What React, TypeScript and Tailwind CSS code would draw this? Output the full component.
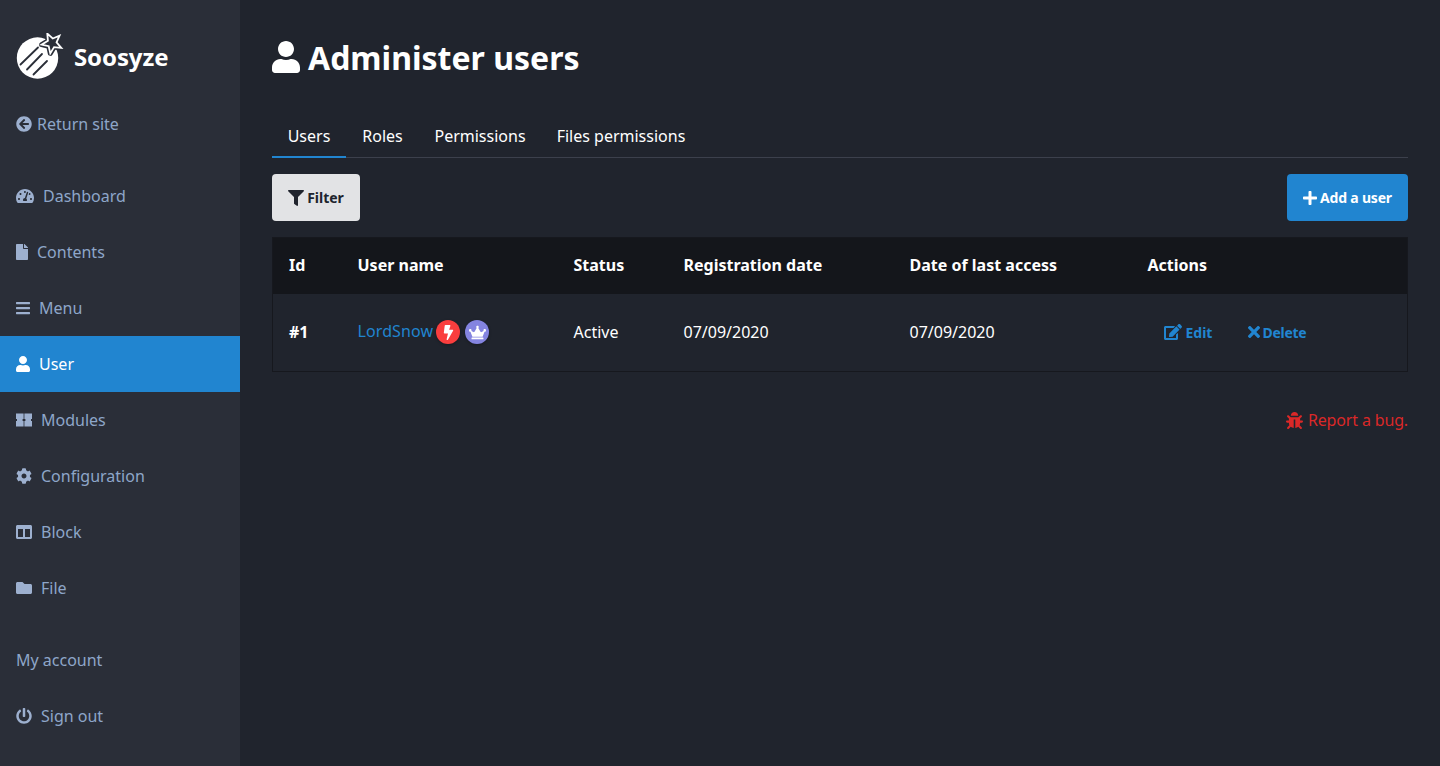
import type { ComponentType, ReactNode } from "react";
import {
  FaArrowCircleLeft,
  FaBars,
  FaBolt,
  FaBug,
  FaCog,
  FaColumns,
  FaCrown,
  FaEdit,
  FaFile,
  FaFilter,
  FaFolder,
  FaPlus,
  FaPowerOff,
  FaTachometerAlt,
  FaTimes,
  FaUser,
} from "react-icons/fa";

type NavItem = {
  label: string;
  icon?: ComponentType<{ className?: string }>;
  width?: string;
  active?: boolean;
};

function ModulesIcon({ className }: { className?: string }) {
  return (
    <svg viewBox="0 0 16 16" className={className} fill="currentColor">
      <path d="M0 1.5h7.6v5.6H6.6v1.8h1v5.6H0V8.9h1V7.1H0zM8.4 1.5H16v5.6h-1v1.8h1v5.6H8.4V8.9h1V7.1h-1z" />
    </svg>
  );
}

const mainNav: NavItem[] = [
  { label: "Dashboard", icon: FaTachometerAlt, width: "w-[18px]" },
  { label: "Contents", icon: FaFile, width: "w-3" },
  { label: "Menu", icon: FaBars, width: "w-[14px]" },
  { label: "User", icon: FaUser, width: "w-[14px]", active: true },
  { label: "Modules", icon: ModulesIcon, width: "w-4" },
  { label: "Configuration", icon: FaCog, width: "w-4" },
  { label: "Block", icon: FaColumns, width: "w-4" },
  { label: "File", icon: FaFolder, width: "w-4" },
];

function NavLink({ item }: { item: NavItem }) {
  const Icon = item.icon;
  return (
    <a
      href="#"
      className={`flex h-14 items-center gap-[9px] px-4 ${
        item.active ? "bg-[#2185d0] text-white" : "text-[#8ea6c9]"
      }`}
    >
      {Icon && <Icon className={`h-4 ${item.width} shrink-0 ${item.active ? "text-white" : "text-[#9db0cf]"}`} />}
      <span>{item.label}</span>
    </a>
  );
}

function Logo() {
  const star = "M31.3.6L36.75 5.46 43.5 2.6 40.55 9.31 45.3 14.8 38.06 14.11 34.3 20.4 32.72 13.23 25.6 11.6 31.92 7.88z";
  return (
    <svg width="48" height="48" viewBox="0 0 48 48" className="shrink-0">
      <circle cx="21.5" cy="25" r="20.7" fill="#fff" />
      <path d={star} fill="#2a2e38" stroke="#2a2e38" strokeWidth="5" strokeLinejoin="round" />
      <path d={star} fill="#2a2e38" stroke="#fff" strokeWidth="1.8" strokeLinejoin="miter" />
      <path
        d="M4.5 31.5L22 14.5M11 36.5L26 21M17.5 41.5L31 28"
        stroke="#2a2e38"
        strokeWidth="1.8"
        strokeLinecap="round"
        fill="none"
      />
    </svg>
  );
}

function Th({ children, className = "" }: { children: ReactNode; className?: string }) {
  return <th className={`px-4 pb-[2px] text-left font-bold ${className}`}>{children}</th>;
}

export default function App() {
  return (
    <div className="flex h-[766px] overflow-hidden bg-[#20242d] font-['Noto_Sans','Open_Sans',sans-serif] text-[16px] text-white">
      <aside className="w-60 shrink-0 bg-[#2a2e38]">
        <div className="flex h-24 items-center gap-[10px] pl-4 pt-[18px]">
          <Logo />
          <span className="text-[24px] leading-none font-bold tracking-[-0.1px]">Soosyze</span>
        </div>
        <a href="#" className="flex h-14 items-center gap-[5px] px-4 text-[#8ea6c9]">
          <FaArrowCircleLeft className="h-4 w-4 text-[#9db0cf]" />
          <span>Return site</span>
        </a>
        <nav className="mt-4">
          {mainNav.map((item) => (
            <NavLink key={item.label} item={item} />
          ))}
        </nav>
        <nav className="mt-4">
          <NavLink item={{ label: "My account" }} />
          <NavLink item={{ label: "Sign out", icon: FaPowerOff, width: "w-4" }} />
        </nav>
      </aside>

      <main className="flex-1 px-8">
        <h1 className="flex h-[114px] items-center gap-2 text-[32px] font-bold">
          <FaUser className="h-8 w-7" />
          <span className="mt-[2px]">Administer users</span>
        </h1>

        <div className="flex h-[44px] border-b border-[#3c404c]">
          <a href="#" className="-mb-px flex w-[74px] items-center justify-center border-b-2 border-[#2185d0] pt-[2px]">
            Users
          </a>
          <a href="#" className="-mb-px flex w-[73px] items-center justify-center border-b-2 border-transparent pt-[2px]">
            Roles
          </a>
          <a href="#" className="-mb-px flex w-[122px] items-center justify-center border-b-2 border-transparent pt-[2px]">
            Permissions
          </a>
          <a href="#" className="-mb-px flex w-[160px] items-center justify-center border-b-2 border-transparent pt-[2px]">
            Files permissions
          </a>
        </div>

        <div className="mt-4 flex justify-between">
          <button className="flex h-[47px] w-[88px] items-center justify-center gap-[3px] rounded bg-[#e2e3e5] text-[14px] font-bold text-[#20242d]">
            <FaFilter className="h-4 w-4" />
            Filter
          </button>
          <button className="flex h-[47px] w-[121px] items-center justify-center gap-[3px] rounded bg-[#2185d0] text-[14px] font-bold tracking-[-0.2px] text-white">
            <FaPlus className="h-4 w-[14px]" />
            Add a user
          </button>
        </div>

        <table className="mt-4 w-full table-fixed border border-[#16181e]">
          <thead>
            <tr className="h-14 bg-[#14161b]">
              <Th className="w-[69px]">Id</Th>
              <Th className="w-[216px]">User name</Th>
              <Th className="w-[110px]">Status</Th>
              <Th className="w-[226px]">Registration date</Th>
              <Th className="w-[238px]">Date of last access</Th>
              <Th>Actions</Th>
            </tr>
          </thead>
          <tbody>
            <tr className="h-[78px]">
              <td className="px-4 font-bold">#1</td>
              <td className="px-4">
                <div className="flex items-center">
                  <a href="#" className="-mt-[3px] mr-[3px] tracking-[0.1px] text-[#2185d0]">
                    LordSnow
                  </a>
                  <span className="mr-[5px] flex h-6 w-6 items-center justify-center rounded-full bg-[#fa3e3e] text-[15px] text-white shadow-[0_1px_3px_rgba(0,0,0,0.3)]">
                    <FaBolt />
                  </span>
                  <span className="flex h-6 w-6 items-center justify-center rounded-full bg-[#8484e0] text-[17px] text-white shadow-[0_1px_3px_rgba(0,0,0,0.3)]">
                    <FaCrown />
                  </span>
                </div>
              </td>
              <td className="px-4">Active</td>
              <td className="px-4">07/09/2020</td>
              <td className="px-4">07/09/2020</td>
              <td className="px-4">
                <div className="flex items-center pl-4 text-[14px] font-bold text-[#2185d0]">
                  <a href="#" className="flex w-[84px] items-center gap-1">
                    <FaEdit className="h-4 w-[18px]" />
                    Edit
                  </a>
                  <a href="#" className="flex items-center gap-[3px] tracking-[-0.3px]">
                    <FaTimes className="h-[18px] w-3" />
                    Delete
                  </a>
                </div>
              </td>
            </tr>
          </tbody>
        </table>

        <div className="mt-9 flex justify-end">
          <a href="#" className="flex items-center gap-[5px] tracking-[-0.15px] text-[#db2828]">
            <FaBug className="h-[17px] w-[17px]" />
            Report a bug.
          </a>
        </div>
      </main>
    </div>
  );
}
